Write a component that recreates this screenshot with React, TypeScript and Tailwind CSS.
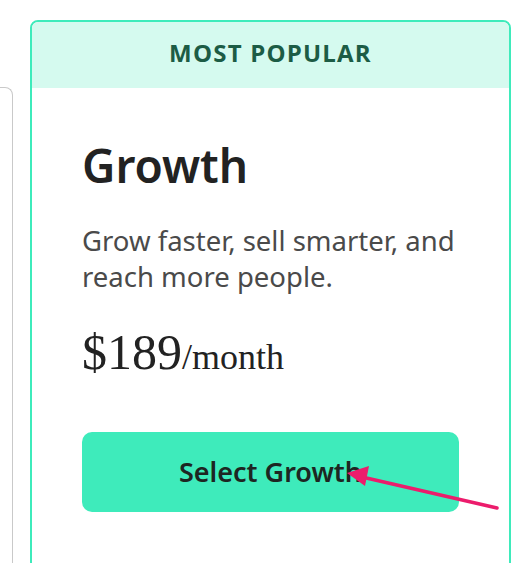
export default function App() {
  return (
    <div className="relative h-[563px] w-[526px] overflow-hidden bg-white">
      <div className="flex items-start gap-[17px] pt-[20px]">
        <div className="mt-[67px] h-[520px] w-[13px] rounded-tr-lg border-t border-r border-[#c9c9c9]" />
        <div className="h-[600px] w-[481px] overflow-hidden rounded-lg border-2 border-[#3eebbb]">
          <div className="flex h-[66px] items-center justify-center bg-[#d5faef] pb-[5px]">
            <span className="font-['Open_Sans',sans-serif] text-[24px] font-bold tracking-[0.05em] text-[#1c5c45]">
              MOST POPULAR
            </span>
          </div>
          <div className="px-[50px] pt-[50px]">
            <h2 className="font-['Noto_Sans',sans-serif] text-[46px] leading-[54px] font-semibold text-[#222222]">
              Growth
            </h2>
            <p className="mt-[31px] font-['Noto_Sans',sans-serif] text-[27.5px] leading-[36px] text-[#4a4a4a]">
              Grow faster, sell smarter, and reach more people.
            </p>
            <div className="mt-[27px] font-['Liberation_Serif',serif] leading-[60px] text-[#222222]">
              <span className="text-[50px]">$189</span>
              <span className="text-[36px]">/month</span>
            </div>
            <button className="mt-[38px] flex h-[80px] w-[377px] items-center justify-center rounded-[10px] bg-[#3eebbb] font-['Noto_Sans',sans-serif] text-[27px] font-semibold text-[#1d2622]">
              Select Growth
            </button>
          </div>
        </div>
      </div>
      <svg className="pointer-events-none absolute top-0 left-0" width="526" height="563" viewBox="0 0 526 563">
        <line x1="497" y1="508" x2="362" y2="477" stroke="#ec1c6c" strokeWidth="3.5" strokeLinecap="round" />
        <polygon points="347,473 369,466 365,486" fill="#ec1c6c" />
      </svg>
    </div>
  );
}
